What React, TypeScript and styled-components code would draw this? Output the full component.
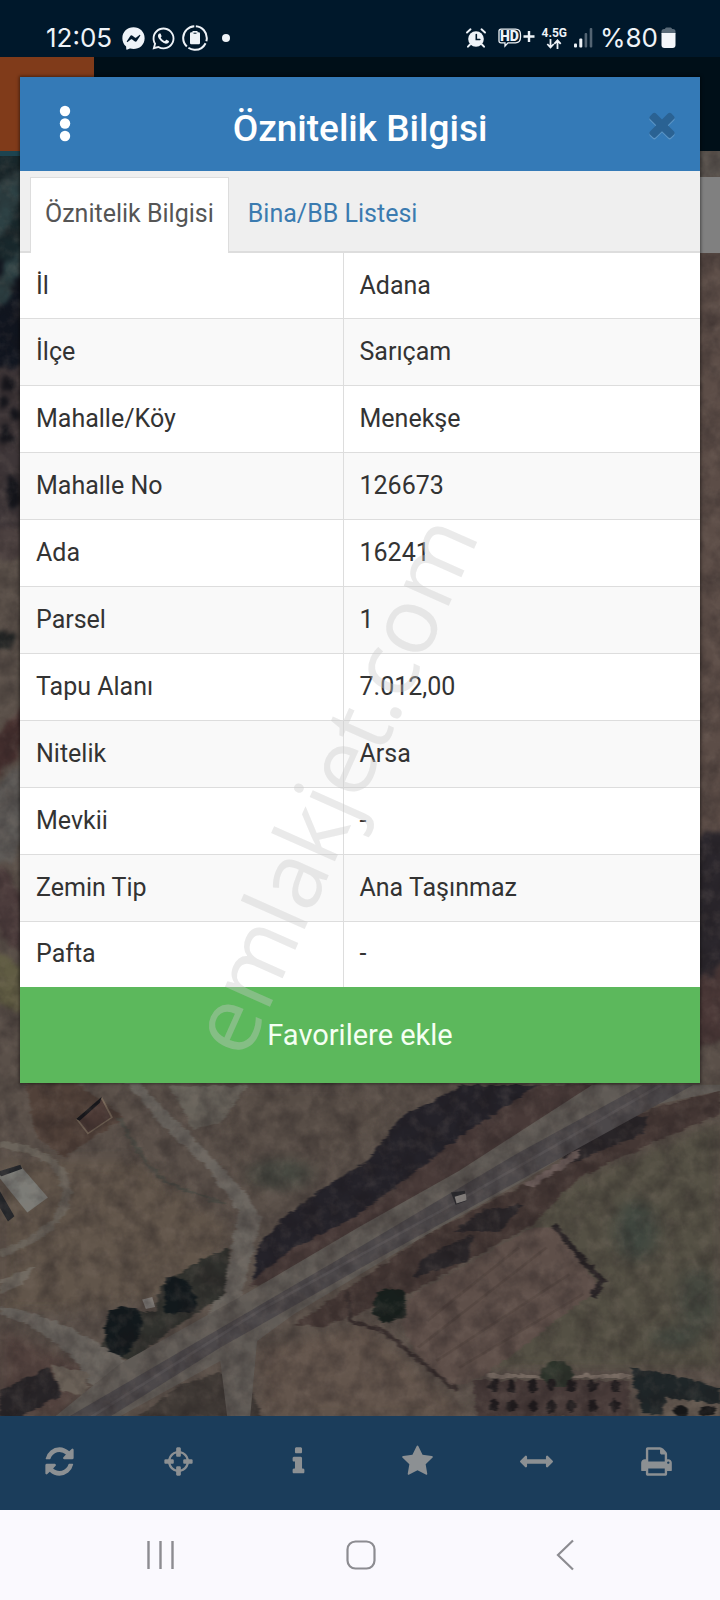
import React, { useState } from 'react';
import styled, { createGlobalStyle } from 'styled-components';
import { FaFacebookMessenger, FaWhatsapp } from 'react-icons/fa';

const GlobalStyle = createGlobalStyle`
  *, *::before, *::after { box-sizing: border-box; }
  body { margin: 0; font-family: Roboto, "Liberation Sans", sans-serif; color: #333; }
  button { font: inherit; border: 0; margin: 0; padding: 0; background: none; cursor: pointer; }
`;

const Phone = styled.div`
  position: relative;
  display: flex;
  flex-direction: column;
  min-height: 100vh;
  overflow: hidden;
`;

/* ---------- status bar ---------- */

const StatusBar = styled.header`
  display: flex;
  align-items: flex-end;
  justify-content: space-between;
  height: 57px;
  padding: 0 44px 4px 46px;
  background: #00182b;
  color: #eef3f8;
  font-family: Inter, Roboto, sans-serif;
  font-size: 26px;
  line-height: 30px;
`;

const StatusGroup = styled.div<{ $gap: number }>`
  display: flex;
  align-items: center;
  gap: ${(p) => p.$gap}px;
  svg { display: block; }
`;

const Network = styled.div`
  display: flex;
  flex-direction: column;
  align-items: center;
  font-family: Roboto, sans-serif;
  font-weight: 700;
  font-size: 12px;
  line-height: 12px;
`;

const Level = styled.div`
  display: flex;
  align-items: center;
  gap: 3px;
`;

/* ---------- application ---------- */

const Application = styled.div`
  position: relative;
  flex: 1;
  display: flex;
  flex-direction: column;
`;

const AppBar = styled.div`
  height: 94px;
  background: #000f18;
`;

const Brand = styled.div`
  width: 94px;
  height: 100%;
  background: #803b1a;
`;

const MapArea = styled.div`
  position: relative;
  flex: 1;
  min-height: 990px;
  background: #524a45;
  > svg { position: absolute; inset: 0; width: 100%; height: 100%; }
`;

const SideHandle = styled.div`
  position: absolute;
  top: 26px;
  right: 0;
  width: 32px;
  height: 76px;
  background: #808080;
`;

const Toolbar = styled.nav`
  display: grid;
  grid-template-columns: repeat(6, 1fr);
  height: 94px;
  padding-right: 4px;
  background: #1b3d5b;
  color: #8c9093;
`;

const ToolButton = styled.button`
  display: flex;
  align-items: center;
  justify-content: center;
  padding-bottom: 4px;
  color: inherit;
`;

/* ---------- dialog ---------- */

const Overlay = styled.div`
  position: absolute;
  inset: 0;
  padding: 20px;
`;

const Dialog = styled.section`
  background: #fff;
  box-shadow: 0 0 3px 1px rgba(0, 0, 0, 0.45);
`;

const DialogHeader = styled.header`
  display: grid;
  grid-template-columns: 90px 1fr 90px;
  align-items: center;
  height: 94px;
  background: #347ab7;
  color: #fff;
`;

const DialogTitle = styled.h1`
  margin: 0;
  padding-top: 10px;
  font-size: 37px;
  line-height: 44px;
  font-weight: 500;
  text-align: center;
`;

const HeaderButton = styled.button<{ $muted?: boolean }>`
  display: flex;
  align-items: center;
  justify-content: center;
  height: 94px;
  color: ${(p) => (p.$muted ? '#2a6293' : '#fff')};
  padding-left: ${(p) => (p.$muted ? 14 : 0)}px;
  svg { display: block; overflow: visible; }
`;

const Tabs = styled.div`
  display: flex;
  align-items: flex-end;
  height: 82px;
  padding-left: 10px;
  background: #efefef;
  border-bottom: 2px solid #ddd;
`;

const Tab = styled.button<{ $active: boolean }>`
  height: 76px;
  margin-bottom: -2px;
  padding: 0 14px 4px;
  border: solid ${(p) => (p.$active ? '#ddd' : 'transparent')};
  border-width: 1px 1px 0;
  margin-right: 4px;
  background: ${(p) => (p.$active ? '#fff' : 'transparent')};
  color: ${(p) => (p.$active ? '#555' : '#3b7bb0')};
  font-size: 25px;
  line-height: 32px;
`;

const DataTable = styled.table`
  width: 100%;
  height: 734px;
  border-collapse: collapse;
  table-layout: fixed;
  font-size: 25px;
  line-height: 32px;
`;

const Row = styled.tr`
  background: #fff;
  &:nth-child(even) { background: #f9f9f9; }
  & + & { border-top: 1px solid #ddd; }
`;

const Label = styled.th`
  width: 323px;
  padding: 0 16px;
  border-right: 1px solid #ddd;
  font-weight: 400;
  text-align: left;
`;

const Value = styled.td`
  padding: 0 16px;
`;

const FavouriteButton = styled.button`
  display: block;
  width: 100%;
  height: 96px;
  background: #5cb85c;
  color: #f4fff2;
  font-size: 29px;
  line-height: 36px;
`;

/* ---------- system navigation ---------- */

const SystemNav = styled.nav`
  display: grid;
  grid-template-columns: 1fr 80px 1fr;
  height: 90px;
  padding: 0 118px 0 120px;
  background: #faf9fe;
`;

const SystemButton = styled.button<{ $side?: 'start' | 'end' }>`
  display: flex;
  align-items: center;
  justify-content: ${(p) => (p.$side === 'start' ? 'flex-start' : p.$side === 'end' ? 'flex-end' : 'center')};
  padding: 0 ${(p) => (p.$side === 'end' ? 28 : 25)}px;
  svg { display: block; flex: none; }
`;

const Watermark = styled.div`
  position: absolute;
  top: 49%;
  left: 46%;
  transform: translate(-50%, -50%) rotate(-66deg);
  font-family: "Open Sans", sans-serif;
  font-size: 92px;
  line-height: 124px;
  white-space: nowrap;
  color: rgba(200, 200, 200, 0.38);
  pointer-events: none;
`;

/* ---------- drawings ---------- */

const toolIcons: { name: string; d: string }[] = [
  {
    name: 'Yenile',
    d: 'M1639 1056q0 5-1 7-64 268-268 434.5t-478 166.5q-146 0-282.5-55t-243.5-157l-129 129q-19 19-45 19t-45-19-19-45v-448q0-26 19-45t45-19h448q26 0 45 19t19 45-19 45l-137 137q71 66 161 102t187 36q134 0 250-65t186-179q11-17 53-117 8-23 30-23h192q13 0 22.5 9.5t9.5 22.5zm25-800v448q0 26-19 45t-45 19h-448q-26 0-45-19t-19-45 19-45l138-138q-148-137-349-137-134 0-250 65t-186 179q-11 17-53 117-8 23-30 23h-199q-13 0-22.5-9.5t-9.5-22.5v-7q65-268 270-434.5t480-166.5q146 0 284 55.5t245 156.5l130-129q19-19 45-19t45 19 19 45z',
  },
  {
    name: 'Konum',
    d: 'M1325 1024h-109q-26 0-45-19t-19-45v-128q0-26 19-45t45-19h109q-32-108-112.5-188.5t-188.5-112.5v109q0 26-19 45t-45 19h-128q-26 0-45-19t-19-45v-109q-108 32-188.5 112.5t-112.5 188.5h109q26 0 45 19t19 45v128q0 26-19 45t-45 19h-109q32 108 112.5 188.5t188.5 112.5v-109q0-26 19-45t45-19h128q26 0 45 19t19 45v109q108-32 188.5-112.5t112.5-188.5zm339-192v128q0 26-19 45t-45 19h-143q-37 161-154.5 278.5t-278.5 154.5v143q0 26-19 45t-45 19h-128q-26 0-45-19t-19-45v-143q-161-37-278.5-154.5t-154.5-278.5h-143q-26 0-45-19t-19-45v-128q0-26 19-45t45-19h143q37-161 154.5-278.5t278.5-154.5v-143q0-26 19-45t45-19h128q26 0 45 19t19 45v143q161 37 278.5 154.5t154.5 278.5h143q26 0 45 19t19 45z',
  },
  {
    name: 'Bilgi',
    d: 'M1216 1344v128q0 26-19 45t-45 19h-512q-26 0-45-19t-19-45v-128q0-26 19-45t45-19h64v-384h-64q-26 0-45-19t-19-45v-128q0-26 19-45t45-19h384q26 0 45 19t19 45v576h64q26 0 45 19t19 45zm-128-1152v192q0 26-19 45t-45 19h-256q-26 0-45-19t-19-45v-192q0-26 19-45t45-19h256q26 0 45 19t19 45z',
  },
  {
    name: 'Favoriler',
    d: 'M1728 647q0 22-26 48l-363 354 86 500q1 7 1 20 0 21-10.5 35.5t-30.5 14.5q-19 0-40-12l-449-236-449 236q-22 12-40 12-21 0-31.5-14.5t-10.5-35.5q0-6 2-20l86-500-364-354q-25-27-25-48 0-37 56-46l502-73 225-455q19-41 49-41t49 41l225 455 502 73q56 9 56 46z',
  },
  {
    name: 'Ölçüm',
    d: 'M1792 896q0 26-19 45l-256 256q-19 19-45 19t-45-19-19-45v-128h-1024v128q0 26-19 45t-45 19-45-19l-256-256q-19-19-19-45t19-45l256-256q19-19 45-19t45 19 19 45v128h1024v-128q0-26 19-45t45-19 45 19l256 256q19 19 19 45z',
  },
  {
    name: 'Yazdır',
    d: 'M448 1536h896v-256h-896v256zm0-640h896v-384h-160q-40 0-68-28t-28-68v-160h-640v640zm1152 64q0-26-19-45t-45-19-45 19-19 45 19 45 45 19 45-19 19-45zm128 0v416q0 13-9.5 22.5t-22.5 9.5h-224v160q0 40-28 68t-68 28h-960q-40 0-68-28t-28-68v-160h-224q-13 0-22.5-9.5t-9.5-22.5v-416q0-79 56.5-135.5t135.5-56.5h64v-544q0-40 28-68t68-28h672q40 0 88 20t76 48l152 152q28 28 48 76t20 88v256h64q79 0 135.5 56.5t56.5 135.5z',
  },
];

const closePath =
  'M1490 1322q0 40-28 68l-136 136q-28 28-68 28t-68-28l-294-294-294 294q-28 28-68 28t-68-28l-136-136q-28-28-28-68t28-68l294-294-294-294q-28-28-28-68t28-68l136-136q28-28 68-28t68 28l294 294 294-294q28-28 68-28t68 28l136 136q28 28 28 68t-28 68l-294 294 294 294q28 28 28 68z';

const BatterySaver = () => (
  <svg width="26" height="26" viewBox="0 0 26 26" fill="none">
    <circle cx="13" cy="13" r="11.8" stroke="currentColor" strokeWidth="2" strokeDasharray="21 2 20 2 27.1 2" transform="rotate(-86 13 13)" />
    <path d="M10.5 6h5v1.300h1.300q1.200 0 1.200 1.200v9.500q0 1.200-1.200 1.200H9.200Q8 19.200 8 18V8.500q0-1.200 1.200-1.200h1.300z" fill="currentColor" />
    <path d="M11.500 8.200h3" stroke="#00182b" />
  </svg>
);

const Alarm = () => (
  <svg width="20" height="20" viewBox="0 0 20 20" fill="none" stroke="currentColor" strokeLinecap="round">
    <circle cx="10" cy="11" r="7.800" fill="currentColor" stroke="none" />
    <path d="M1 4.500 4.500 1.300M19 4.500l-3.500-3.200M4 16.500l-2 2.200M16 16.500l2 2.200" strokeWidth="1.900" />
    <path d="M10.300 6.500v5h3.500" stroke="#00182b" strokeWidth="1.600" />
  </svg>
);

const HdVoice = () => (
  <svg width="37" height="20" viewBox="0 0 37 20" fill="none" stroke="currentColor">
    <path d="M3 1.200h14.500q5 0 5 5.500v2.600q0 5.500-5 5.500H10l-3 3.200v-3.200H3q-2 0-2-2V3.200q0-2 2-2z" strokeWidth="1.300" />
    <text x="2" y="13" fill="currentColor" stroke="none" fontFamily="Roboto, sans-serif" fontWeight="900" fontSize="14">HD</text>
    <path d="M25.500 8.500h11M31 3v11" strokeWidth="2.400" />
  </svg>
);

const DataArrows = () => (
  <svg width="16" height="10" viewBox="0 0 16 10" fill="none" stroke="currentColor" strokeWidth="1.800">
    <path d="M4.500 0v8M1.300 5l3.200 3.500L7.700 5M11.500 10V1.500M8.300 4.800l3.200-3.500 3.200 3.500" />
  </svg>
);

const Signal = () => (
  <svg width="19" height="20" viewBox="0 0 19 20" fill="currentColor">
    <rect x="0" y="15.500" width="3" height="4" rx="1" />
    <rect x="5.300" y="10.500" width="3" height="9" rx="1" />
    <rect x="10.600" y="5" width="2.600" height="14.500" rx="1" opacity=".35" />
    <rect x="15.700" y="0" width="2.600" height="19.500" rx="1" opacity=".35" />
  </svg>
);

const Battery = () => (
  <svg width="15" height="22" viewBox="0 0 15 22">
    <path d="M4 2q0-1.500 1.500-1.500h4Q11 .5 11 2h1q2.500 0 2.500 2.500V7H.5V4.500Q.5 2 3 2z" fill="#5a6b79" />
    <path d="M.5 6h14v12q0 3-3 3h-8q-3 0-3-3z" fill="#f3f6fa" />
  </svg>
);

const treeRows = [975, 1035];

const SatelliteImage = () => (
  <svg viewBox="0 0 720 1264" preserveAspectRatio="xMidYMax slice" aria-hidden="true">
    <defs>
      <filter id="rough" x="-5%" y="-5%" width="110%" height="110%" colorInterpolationFilters="sRGB">
        <feTurbulence type="fractalNoise" baseFrequency="0.06" numOctaves="3" seed="4" result="n" />
        <feDisplacementMap in="SourceGraphic" in2="n" xChannelSelector="R" yChannelSelector="G" scale="18" />
        <feGaussianBlur stdDeviation="2.200" />
      </filter>
      <filter id="patch" x="-20%" y="-20%" width="140%" height="140%" colorInterpolationFilters="sRGB">
        <feGaussianBlur stdDeviation="16" />
      </filter>
      <filter id="edge" x="-5%" y="-5%" width="110%" height="110%" colorInterpolationFilters="sRGB">
        <feGaussianBlur stdDeviation="1.500" />
      </filter>
      <filter id="grain" x="0" y="0" width="100%" height="100%" colorInterpolationFilters="sRGB">
        <feTurbulence type="fractalNoise" baseFrequency="0.05" numOctaves="4" seed="9" />
        <feColorMatrix values="0 0 0 0 0.1  0 0 0 0 0.08  0 0 0 0 0.09  1.500 0 0 0 -0.55" />
      </filter>
      <filter id="light" x="0" y="0" width="100%" height="100%" colorInterpolationFilters="sRGB">
        <feTurbulence type="fractalNoise" baseFrequency="0.08" numOctaves="4" seed="23" />
        <feColorMatrix values="0 0 0 0 0.56  0 0 0 0 0.5  0 0 0 0 0.46  1.300 0 0 0 -0.55" />
      </filter>
    </defs>
    <rect width="720" height="1264" fill="#5a5049" />

    <g filter="url(#rough)">
      <rect x="-20" width="60" height="120" fill="#18282c" />
      <rect x="-20" y="110" width="60" height="110" fill="#10151f" />
      <path d="M-10 40l40-30v30l-40 60zM-10 130l40-40v20l-40 60z" fill="#2d4144" />
      <rect x="-20" y="216" width="60" height="160" fill="#3e3638" />
      <g fill="#14151b">
        <ellipse cx="9" cy="232" rx="7" ry="7" />
        <ellipse cx="4" cy="250" rx="5" ry="6" />
        <ellipse cx="15" cy="262" rx="7" ry="8" />
        <ellipse cx="7" cy="284" rx="5" ry="7" />
        <ellipse cx="14" cy="340" rx="6" ry="18" />
      </g>
      <rect x="-20" y="376" width="60" height="30" fill="#4c4140" />
      <ellipse cx="6" cy="488" rx="11" ry="10" fill="#1e2222" />
      <path d="M-10 590 30 550v40L-10 630z" fill="#46302f" />
      <path d="M-10 640 30 605v70l-20 40-20-10z" fill="#5e5b58" />
      <path d="M-10 705l40 45v60l-40-40z" fill="#4c3c3c" />
      <path d="M-10 795l40 25v40l-40-10z" fill="#605c43" />
      <rect x="690" width="50" height="26" fill="#5b5550" />
      <path d="M690 100h50v590h-50z" fill="#5c4d47" />
      <path d="M690 690l50-22v130l-50 40z" fill="#2b272d" />
      <path d="M690 830l50-25v75l-50 20z" fill="#4a3837" />
    </g>

    <g transform="translate(0 909) scale(.4592 .3333)">
      <g filter="url(#patch)">
        <path d="M0 300h300l200 200-60 200-300 50H0z" fill="#61554a" />
        <path d="M540 430 850 180 780 80H460z" fill="#574d46" />
        <path d="M1180 400 1568 180v740H1060z" fill="#545044" />
        <ellipse cx="1385" cy="510" rx="45" ry="90" fill="#414840" />
        <ellipse cx="1520" cy="720" rx="45" ry="100" fill="#45483f" />
        <ellipse cx="1470" cy="830" rx="50" ry="30" fill="#454a41" />
        <ellipse cx="610" cy="340" rx="70" ry="45" fill="#484a42" />
        <path d="M560 870 800 790 1020 1067H570z" fill="#63554c" />
        <path d="M0 800l200 130-60 137H0z" fill="#51413d" />
      </g>
      <g filter="url(#rough)">
        <path d="M55 60 150 50l60 60 60 60-130 120-60-60z" fill="#514139" />
        <path d="M370 75h170l-60 110-60 20z" fill="#68635b" />
        <path d="M260 170q60 160 110 200l120 60" fill="none" stroke="#4c4b44" strokeWidth="8" />
        <path d="M0 250q130 20 145 130 10 120-145 200" fill="none" stroke="#6b645b" strokeWidth="20" />
        <path d="M0 660 80 615 50 670 0 700z" fill="#716a61" />

        <path d="M300 60l70 100 80 110 80 120 40 80-20 110-30 150-70 40 50-170 20-150-70-130-100-130-80-130z" fill="#6a655f" />
        <path d="M1160 72 870 300 690 440 540 680 760 600 1250 150 1300 72z" fill="#483a38" />
        <path d="M1010 72 870 170 800 300 700 385 610 480 560 560 550 660 640 560 760 480 860 380 1010 220 1170 72z" fill="#242229" />
        <path d="M1568 90 1400 150 1140 370 930 520 760 680 640 790 700 800 900 690 1160 490 1260 350 1430 240 1568 160z" fill="#443734" />
        <path d="M1410 170l-60-10-130 130 20 20 160-90zM1030 520l-110 70-20 60 120-50zM1140 430l-90 20-60 60 100 0z" fill="#292528" />
        <path d="M1260 260l-60 60-60 50 20 10 100-90z" fill="#6b5c59" />
        <path d="M500 560l-80 50-70 70-10 70-50 0-50 20-20 100 70 30 80-90 120-110z" fill="#30312d" />
        <path d="M240 750q50-30 70 10l0 60-50 80q-50-50-20-150zM360 650q50-10 60 40l10 60-70 10z" fill="#12191c" />
        <path d="M0 735q130 20 290 180l-90 60Q140 820 0 760z" fill="#6a655f" />
        <path d="M0 990 105 920l30 80-90 67H0z" fill="#282528" />
        <path d="M110 910l80 20v80l-60-20z" fill="#696057" />
        <path d="M300 1067l100-100 80-30 70 60 20 70z" fill="#3f3935" />
      </g>

      <path d="M168 175 222 112l22 58-52 48z" fill="#503d38" stroke="#7a6a5a" strokeWidth="4" />
      <path d="M166 175 222 108l-4 18-44 54z" fill="#17171b" />
      <path d="M-10 335 45 315 105 410 60 455z" fill="#7c7c77" />
      <path d="M-10 335 45 312l4 12-45 22zM0 390l32 76-14 16L0 440z" fill="#24262a" />
      <path d="M310 716 332 708 338 738 318 744z" fill="#8a8681" />

      <g filter="url(#edge)">
        <path d="M120 1067 260 910 540 695 780 500 1000 330 1290 72H1568v18L1400 140 1140 360 930 520 640 760 560 840 545 1067h-50L480 900 260 1067z" fill="#605b56" />
        <path d="M150 1067 420 850 800 545 1130 275 1400 72h110L1130 360 800 610 480 860 240 1067z" fill="#4c484a" />
        <path d="M200 1067 570 745 960 450 1440 72" fill="none" stroke="#555153" strokeWidth="7" />
      </g>

      <g filter="url(#rough)">
        <path d="M870 770 900 700 1160 500 1210 500 1305 680 1060 940 990 980 900 870z" fill="#5e4f49" />
        <path d="M1205 490 1270 600 1310 660 1290 710 1310 660" fill="none" stroke="#282325" strokeWidth="14" />
        <path d="M755 690l10 90 70 30 160 180" fill="none" stroke="#382e2d" strokeWidth="11" />
        <path d="M820 700q30-30 60-5l5 70-50 25-25-40z" fill="#171f1c" />
        <path d="M1030 960h340v107h-330z" fill="#483b39" />
        <path d="M1060 945h310" stroke="#7d7067" strokeWidth="12" />
        <path d="M1370 920l90 20 108 40v80H1400z" fill="#1f2628" />
        <path d="M1450 1010l118 20v40h-128z" fill="#675c53" />
        <ellipse cx="1212" cy="940" rx="34" ry="38" fill="#2e352c" />
        {treeRows.map((y) =>
          [1075, 1115, 1160, 1200, 1243, 1290, 1340].map((x) => <ellipse key={`${x}-${y}`} cx={x} cy={y} rx="10" ry="19" fill="#1f1b1d" />),
        )}
        <ellipse cx="1480" cy="1050" rx="15" ry="18" fill="#161718" />
        <ellipse cx="1540" cy="1050" rx="17" ry="14" fill="#161718" />
      </g>
      <g fill="none" stroke="#4c3e3a" strokeWidth="7" opacity=".4" filter="url(#edge)">
        <path d="M910 860 1190 560M950 900 1240 640M930 780 1130 560M1000 920 1270 700" />
      </g>
      <path d="M982 395 1012 390 1016 420 992 432z" fill="#2a2a2e" />
      <path d="M990 408 1014 398 1016 418 994 428z" fill="#8a8683" />
    </g>
    <rect width="720" height="1264" filter="url(#light)" opacity=".3" />
    <rect width="720" height="1264" filter="url(#grain)" opacity=".45" />
    <path d="M0 2.500h94" stroke="#1d4450" strokeWidth="5" />
  </svg>
);

/* ---------- data ---------- */

const parcel: [string, string][] = [
  ['İl', 'Adana'],
  ['İlçe', 'Sarıçam'],
  ['Mahalle/Köy', 'Menekşe'],
  ['Mahalle No', '126673'],
  ['Ada', '16241'],
  ['Parsel', '1'],
  ['Tapu Alanı', '7.012,00'],
  ['Nitelik', 'Arsa'],
  ['Mevkii', '-'],
  ['Zemin Tip', 'Ana Taşınmaz'],
  ['Pafta', '-'],
];

const tabs = ['Öznitelik Bilgisi', 'Bina/BB Listesi'];

export default function App() {
  const [active, setActive] = useState(0);

  return (
    <Phone>
      <GlobalStyle />
      <StatusBar>
        <StatusGroup $gap={10}>
          <span>12:05</span>
          <StatusGroup $gap={6}>
            <FaFacebookMessenger size={23} />
            <FaWhatsapp size={25} />
            <BatterySaver />
            <svg width="24" height="8" viewBox="0 0 24 8"><circle cx="12" cy="4" r="4" fill="currentColor" /></svg>
          </StatusGroup>
        </StatusGroup>
        <StatusGroup $gap={7}>
          <StatusGroup $gap={12}>
            <Alarm />
            <HdVoice />
          </StatusGroup>
          <Network>
            4.5G
            <DataArrows />
          </Network>
          <Signal />
          <Level>
            <span>%80</span>
            <Battery />
          </Level>
        </StatusGroup>
      </StatusBar>

      <Application>
        <AppBar>
          <Brand />
        </AppBar>
        <MapArea>
          <SatelliteImage />
          <SideHandle />
        </MapArea>
        <Toolbar>
          {toolIcons.map((icon) => (
            <ToolButton key={icon.name} type="button" aria-label={icon.name}>
              <svg width="33" height="33" viewBox="0 0 1792 1792" fill="currentColor">
                <path d={icon.d} />
              </svg>
            </ToolButton>
          ))}
        </Toolbar>

        <Overlay>
          <Dialog role="dialog" aria-labelledby="dialog-title">
            <DialogHeader>
              <HeaderButton type="button" aria-label="Menü">
                <svg width="10" height="36" viewBox="0 0 10 36" fill="currentColor">
                  <circle cx="5" cy="5" r="5.200" />
                  <circle cx="5" cy="17.500" r="5.200" />
                  <circle cx="5" cy="30" r="5.200" />
                </svg>
              </HeaderButton>
              <DialogTitle id="dialog-title">Öznitelik Bilgisi</DialogTitle>
              <HeaderButton type="button" aria-label="Kapat" $muted>
                <svg width="38" height="38" viewBox="0 0 1792 1792">
                  <path d={closePath} fill="#5c95c5" transform="translate(0 70)" />
                  <path d={closePath} fill="currentColor" />
                </svg>
              </HeaderButton>
            </DialogHeader>

            <Tabs role="tablist">
              {tabs.map((tab, i) => (
                <Tab key={tab} type="button" role="tab" aria-selected={active === i} $active={active === i} onClick={() => setActive(i)}>
                  {tab}
                </Tab>
              ))}
            </Tabs>

            <DataTable>
              <tbody>
                {parcel.map(([label, value]) => (
                  <Row key={label}>
                    <Label scope="row">{label}</Label>
                    <Value>{value}</Value>
                  </Row>
                ))}
              </tbody>
            </DataTable>

            <FavouriteButton type="button">Favorilere ekle</FavouriteButton>
          </Dialog>
        </Overlay>
      </Application>

      <SystemNav>
        <SystemButton type="button" aria-label="Son uygulamalar" $side="start">
          <svg width="30" height="30" viewBox="0 0 30 30" stroke="#8c8c91" strokeWidth="2.400">
            <path d="M3.500 1v28M15.500 1v28M27.500 1v28" />
          </svg>
        </SystemButton>
        <SystemButton type="button" aria-label="Ana ekran">
          <svg width="30" height="30" viewBox="0 0 30 30" fill="none" stroke="#8c8c91" strokeWidth="2.200">
            <rect x="1.500" y="1.500" width="27" height="27" rx="8" />
          </svg>
        </SystemButton>
        <SystemButton type="button" aria-label="Geri" $side="end">
          <svg width="18" height="32" viewBox="0 0 18 32" fill="none" stroke="#8c8c91" strokeWidth="2.200">
            <path d="M17 1.500 2 16l15 14.500" />
          </svg>
        </SystemButton>
      </SystemNav>
      <Watermark aria-hidden="true">emlakjet.com</Watermark>
    </Phone>
  );
}
